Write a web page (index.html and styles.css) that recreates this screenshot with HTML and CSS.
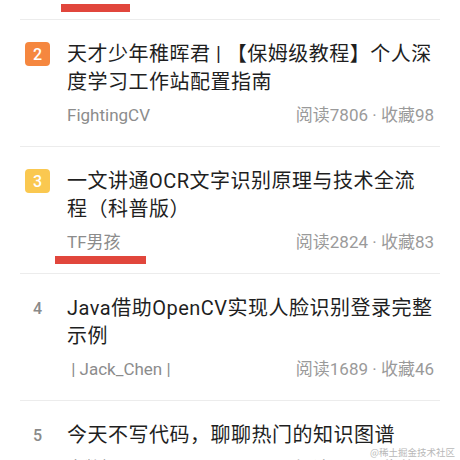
FILE: index.html
```html
<!DOCTYPE html>
<html lang="zh-CN">
<head>
<meta charset="utf-8">
<title>热门文章</title>
<link rel="stylesheet" href="styles.css">
</head>
<body>
<div class="page">
  <div class="prev"><span class="mark mark-top"></span></div>
  <ol class="list">
    <li class="item">
      <span class="rank rank-2">2</span>
      <div class="body">
        <h3 class="title">天才少年稚晖君 | 【保姆级教程】个人深度学习工作站配置指南</h3>
        <div class="meta"><span class="author">FightingCV</span><span class="stats">阅读7806 · 收藏98</span></div>
      </div>
    </li>
    <li class="item">
      <span class="rank rank-3">3</span>
      <div class="body">
        <h3 class="title">一文讲通OCR文字识别原理与技术全流程（科普版）</h3>
        <div class="meta"><span class="author underlined">TF男孩</span><span class="stats">阅读2824 · 收藏83</span></div>
      </div>
    </li>
    <li class="item">
      <span class="rank rank-plain">4</span>
      <div class="body">
        <h3 class="title">Java借助OpenCV实现人脸识别登录完整示例</h3>
        <div class="meta"><span class="author">&nbsp;|&nbsp;Jack_Chen |</span><span class="stats">阅读1689 · 收藏46</span></div>
      </div>
    </li>
    <li class="item">
      <span class="rank rank-plain">5</span>
      <div class="body">
        <h3 class="title">今天不写代码，聊聊热门的知识图谱</h3>
        <div class="meta"><span class="author">大数据</span><span class="stats">阅读1520 · 收藏41</span></div>
      </div>
    </li>
  </ol>
  <div class="watermark">@稀土掘金技术社区</div>
</div>
</body>
</html>
```

FILE: styles.css
```css
html, body {
  margin: 0;
  padding: 0;
  background: #ffffff;
}

.page {
  position: relative;
  width: 460px;
  height: 460px;
  overflow: hidden;
  font-family: Roboto, "Noto Sans CJK SC", "Noto Sans", sans-serif;
}

.prev {
  height: 15px;
}

.mark {
  display: block;
  background: #e1463c;
}

.mark-top {
  margin: 4px 0 0 61px;
  width: 69px;
  height: 8px;
}

.list {
  list-style: none;
  margin: 0 20px;
  padding: 0;
}

.item {
  display: grid;
  grid-template-columns: 25px 1fr;
  column-gap: 17px;
  align-items: start;
  padding: 20px 6px 20px 5px;
  border-top: 1px solid #ececec;
}

.rank {
  display: flex;
  align-items: center;
  justify-content: center;
  height: 24px;
  margin-top: 2px;
  border-radius: 4px;
  font-size: 16px;
  font-weight: 500;
  color: #ffffff;
}

.rank-2 {
  background: #f5873f;
}

.rank-3 {
  background: #fac850;
}

.rank-plain {
  color: #8a8a8a;
  font-size: 16px;
}

.title {
  margin: 0;
  font-family: Roboto, "Noto Sans CJK SC", sans-serif;
  font-size: 20px;
  line-height: 28px;
  font-weight: 400;
  letter-spacing: 0.5px;
  color: #1f1f1f;
}

.meta {
  display: flex;
  justify-content: space-between;
  align-items: center;
  margin-top: 8px;
  font-size: 17px;
  line-height: 22px;
}

.author {
  position: relative;
  color: #8c8c8c;
}

.underlined::after {
  content: "";
  position: absolute;
  left: -12px;
  top: 25px;
  width: 91px;
  height: 8px;
  background: #e1463c;
}

.stats {
  color: #9a9a9a;
}

.watermark {
  position: absolute;
  right: 5px;
  bottom: 3px;
  font-size: 9.5px;
  line-height: 10px;
  color: #b8b8b8;
  font-family: "Noto Sans CJK SC", sans-serif;
}
```
